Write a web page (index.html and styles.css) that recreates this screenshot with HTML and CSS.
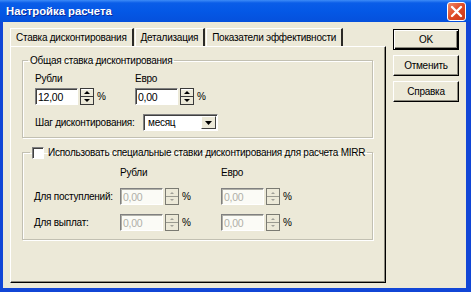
FILE: index.html
```html
<!DOCTYPE html>
<html lang="ru">
<head>
  <meta charset="utf-8">
  <title>Настройка расчета</title>
  <link rel="stylesheet" href="styles.css">
</head>
<body>
  <div class="window">
    <div class="titlebar">
      <span class="title">Настройка расчета</span>
      <span class="close">
        <svg width="13" height="13" viewBox="0 0 13 13">
          <path d="M2 2 L11 11 M11 2 L2 11" stroke="#fff" stroke-width="2.4" stroke-linecap="round"/>
        </svg>
      </span>
    </div>

    <div class="content">
      <div class="tabs-area">
        <ul class="tabs">
          <li class="tab active">Ставка дисконтирования</li>
          <li class="tab">Детализация</li>
          <li class="tab">Показатели эффективности</li>
        </ul>

        <div class="panel">
          <!-- общая ставка -->
          <fieldset class="group group-main">
            <legend>Общая ставка дисконтирования</legend>
            <div class="rates">
              <div class="rate">
                <div class="col-label">Рубли</div>
                <div class="spin-field">
                  <span class="edit">12,00</span>
                  <svg class="spin" width="14" height="17" viewBox="0 0 14 17">
                    <rect x="0.5" y="0.5" width="13" height="16" fill="#ece9d8" stroke="#3a3a3a"/>
                    <line x1="1" y1="8.5" x2="13" y2="8.5" stroke="#3a3a3a"/>
                    <line x1="1.5" y1="1.5" x2="12.5" y2="1.5" stroke="#fff"/>
                    <polygon points="4,6 10,6 7,3" fill="#000"/>
                    <polygon points="4,11 10,11 7,14" fill="#000"/>
                  </svg>
                  <span class="pct">%</span>
                </div>
              </div>
              <div class="rate">
                <div class="col-label">Евро</div>
                <div class="spin-field">
                  <span class="edit">0,00</span>
                  <svg class="spin" width="14" height="17" viewBox="0 0 14 17">
                    <rect x="0.5" y="0.5" width="13" height="16" fill="#ece9d8" stroke="#3a3a3a"/>
                    <line x1="1" y1="8.5" x2="13" y2="8.5" stroke="#3a3a3a"/>
                    <line x1="1.5" y1="1.5" x2="12.5" y2="1.5" stroke="#fff"/>
                    <polygon points="4,6 10,6 7,3" fill="#000"/>
                    <polygon points="4,11 10,11 7,14" fill="#000"/>
                  </svg>
                  <span class="pct">%</span>
                </div>
              </div>
            </div>
            <div class="step-row">
              <span class="step-label">Шаг дисконтирования:</span>
              <span class="combo">
                <span class="combo-text">месяц</span>
                <span class="combo-btn">
                  <svg width="7" height="4" viewBox="0 0 7 4"><polygon points="0,0 7,0 3.5,4" fill="#000"/></svg>
                </span>
              </span>
            </div>
          </fieldset>

          <!-- ставки MIRR -->
          <fieldset class="group group-mirr">
            <legend><span class="check"></span>Использовать специальные ставки дисконтирования для расчета MIRR</legend>
            <div class="mirr-grid">
              <span></span>
              <span class="col-label">Рубли</span>
              <span class="col-label">Евро</span>

              <span class="row-label">Для поступлений:</span>
              <div class="spin-field disabled">
                <span class="edit">0,00</span>
                <svg class="spin" width="14" height="17" viewBox="0 0 14 17">
                  <rect x="0.5" y="0.5" width="13" height="16" fill="#ece9d8" stroke="#7a7a72"/>
                  <line x1="1" y1="8.5" x2="13" y2="8.5" stroke="#9a9a90"/>
                  <polygon points="5,6 9,6 7,4" fill="#a0a098"/>
                  <polygon points="5,11 9,11 7,13" fill="#a0a098"/>
                </svg>
                <span class="pct">%</span>
              </div>
              <div class="spin-field disabled">
                <span class="edit">0,00</span>
                <svg class="spin" width="14" height="17" viewBox="0 0 14 17">
                  <rect x="0.5" y="0.5" width="13" height="16" fill="#ece9d8" stroke="#7a7a72"/>
                  <line x1="1" y1="8.5" x2="13" y2="8.5" stroke="#9a9a90"/>
                  <polygon points="5,6 9,6 7,4" fill="#a0a098"/>
                  <polygon points="5,11 9,11 7,13" fill="#a0a098"/>
                </svg>
                <span class="pct">%</span>
              </div>

              <span class="row-label">Для выплат:</span>
              <div class="spin-field disabled">
                <span class="edit">0,00</span>
                <svg class="spin" width="14" height="17" viewBox="0 0 14 17">
                  <rect x="0.5" y="0.5" width="13" height="16" fill="#ece9d8" stroke="#7a7a72"/>
                  <line x1="1" y1="8.5" x2="13" y2="8.5" stroke="#9a9a90"/>
                  <polygon points="5,6 9,6 7,4" fill="#a0a098"/>
                  <polygon points="5,11 9,11 7,13" fill="#a0a098"/>
                </svg>
                <span class="pct">%</span>
              </div>
              <div class="spin-field disabled">
                <span class="edit">0,00</span>
                <svg class="spin" width="14" height="17" viewBox="0 0 14 17">
                  <rect x="0.5" y="0.5" width="13" height="16" fill="#ece9d8" stroke="#7a7a72"/>
                  <line x1="1" y1="8.5" x2="13" y2="8.5" stroke="#9a9a90"/>
                  <polygon points="5,6 9,6 7,4" fill="#a0a098"/>
                  <polygon points="5,11 9,11 7,13" fill="#a0a098"/>
                </svg>
                <span class="pct">%</span>
              </div>
            </div>
          </fieldset>
        </div>
      </div>

      <div class="buttons">
        <button class="btn default">OK</button>
        <button class="btn">Отменить</button>
        <button class="btn">Справка</button>
      </div>
    </div>
  </div>
</body>
</html>
```

FILE: styles.css
```css
body {
  margin: 0;
  font-family: "Liberation Sans", Arial, sans-serif;
  font-size: 10px;
  letter-spacing: -0.25px;
  color: #000;
  white-space: nowrap;
}

.window {
  width: 471px;
  height: 292px;
  box-sizing: border-box;
  background-color: #1a55dc;
  border-left: 3px solid #1146d6;
  border-right: 5px solid #1146d6;
  border-bottom: 4px solid #1146d6;
  display: flex;
  flex-direction: column;
}

.titlebar {
  height: 22px;
  margin: 0 -5px 0 -3px;
  padding: 0 5px 0 6px;
  display: flex;
  align-items: center;
  justify-content: space-between;
  background: linear-gradient(#3d8bf7 0, #0a5de8 3px, #0458e6 50%, #0550dc 100%);
}

.title {
  color: #fff;
  font-weight: bold;
  font-size: 11.3px;
  letter-spacing: 0;
  text-shadow: 1px 1px 0 #0a2a9a;
}

.close {
  width: 19px;
  height: 19px;
  box-sizing: border-box;
  margin-top: 1px;
  border: 1px solid #fff;
  border-radius: 3px;
  background: linear-gradient(135deg, #f08a6a, #e04a25 50%, #c8381a);
  display: flex;
  align-items: center;
  justify-content: center;
}

.content {
  flex: 1;
  background-color: #ece9d8;
  padding: 6px 7px 5px 7px;
  display: flex;
  gap: 7px;
}

.tabs-area {
  width: 376px;
  display: flex;
  flex-direction: column;
}

.tabs {
  list-style: none;
  margin: 0;
  padding: 0;
  height: 18px;
  display: flex;
}

.tab {
  padding: 0 5px 0 5px;
  line-height: 17px;
  border-top: 1px solid #fff;
  border-left: 1px solid #fff;
  border-right: 2px solid #2b2a26;
  margin-right: 1px;
}

.panel {
  flex: 1;
  box-sizing: border-box;
  border-top: 1px solid #fff;
  border-left: 1px solid #fff;
  border-right: 1px solid #000;
  border-bottom: 1px solid #000;
  box-shadow: inset -1px -1px 0 #8c8a7e;
  padding: 7px 12px 0 11px;
}

.group {
  margin: 0;
  border: 1px solid #c2c0b2;
  box-shadow: inset 1px 1px 0 #fff, 1px 1px 0 #fff;
  padding: 0 0 0 12px;
}

.group legend {
  margin-left: -7px;
  padding: 0 2px;
  line-height: 13px;
}

.group-main {
  padding-bottom: 6px;
}

.rates {
  display: flex;
  margin-top: 5px;
}

.rate {
  width: 100px;
}

.col-label {
  line-height: 13px;
  margin-bottom: 3px;
}

.spin-field {
  display: flex;
  align-items: center;
}

.edit {
  width: 43px;
  height: 17px;
  box-sizing: border-box;
  background-color: #fff;
  border-top: 1px solid #808080;
  border-left: 1px solid #808080;
  border-right: 1px solid #fff;
  border-bottom: 1px solid #fff;
  box-shadow: inset 1px 1px 0 #404040;
  padding: 1px 0 0 2px;
  line-height: 14px;
  font-size: 10.5px;
}

.spin {
  margin-left: 2px;
  display: block;
}

.pct {
  margin-left: 3px;
}

.disabled .edit {
  background-color: #fbfbf6;
  color: #b0b0a8;
  box-shadow: inset 1px 1px 0 #b0b0a8;
}

.step-row {
  display: flex;
  align-items: center;
  margin-top: 9px;
}

.step-label {
  width: 108px;
}

.combo {
  width: 75px;
  height: 17px;
  box-sizing: border-box;
  background-color: #fff;
  border-top: 1px solid #808080;
  border-left: 1px solid #808080;
  border-right: 1px solid #fff;
  border-bottom: 1px solid #fff;
  box-shadow: inset 1px 1px 0 #404040;
  display: flex;
  justify-content: space-between;
  padding: 1px 1px 1px 4px;
}

.combo-text {
  line-height: 14px;
}

.combo-btn {
  width: 15px;
  box-sizing: border-box;
  background-color: #ece9d8;
  border-top: 1px solid #fff;
  border-left: 1px solid #fff;
  border-right: 1px solid #404040;
  border-bottom: 1px solid #404040;
  display: flex;
  align-items: center;
  justify-content: center;
}

.group-mirr {
  margin-top: 8px;
  padding-bottom: 8px;
}

.group-mirr legend {
  margin-left: -5px;
  display: flex;
  align-items: center;
}

.check {
  width: 12px;
  height: 12px;
  box-sizing: border-box;
  background-color: #fff;
  border-top: 1px solid #808080;
  border-left: 1px solid #808080;
  border-right: 1px solid #fff;
  border-bottom: 1px solid #fff;
  box-shadow: inset 1px 1px 0 #404040;
  margin-right: 4px;
}

.mirr-grid {
  display: grid;
  grid-template-columns: 86px 101px 1fr;
  grid-template-rows: 13px 17px 17px;
  row-gap: 9px;
  align-items: center;
  margin-top: 7px;
  margin-left: -1px;
}

.mirr-grid .col-label {
  margin-bottom: 0;
}

.buttons {
  width: 66px;
  padding-top: 1px;
  display: flex;
  flex-direction: column;
  gap: 5px;
}

.btn {
  height: 21px;
  margin: 0;
  padding: 0;
  font-family: inherit;
  font-size: 10px;
  letter-spacing: -0.25px;
  color: #000;
  background-color: #ece9d8;
  border-top: 1px solid #fff;
  border-left: 1px solid #fff;
  border-right: 1px solid #000;
  border-bottom: 1px solid #000;
  box-shadow: inset -1px -1px 0 #8c8a7e;
}

.btn.default {
  border: 1px solid #000;
  box-shadow: inset 1px 1px 0 #fff, inset -1px -1px 0 #000, inset -2px -2px 0 #8c8a7e;
}
```
